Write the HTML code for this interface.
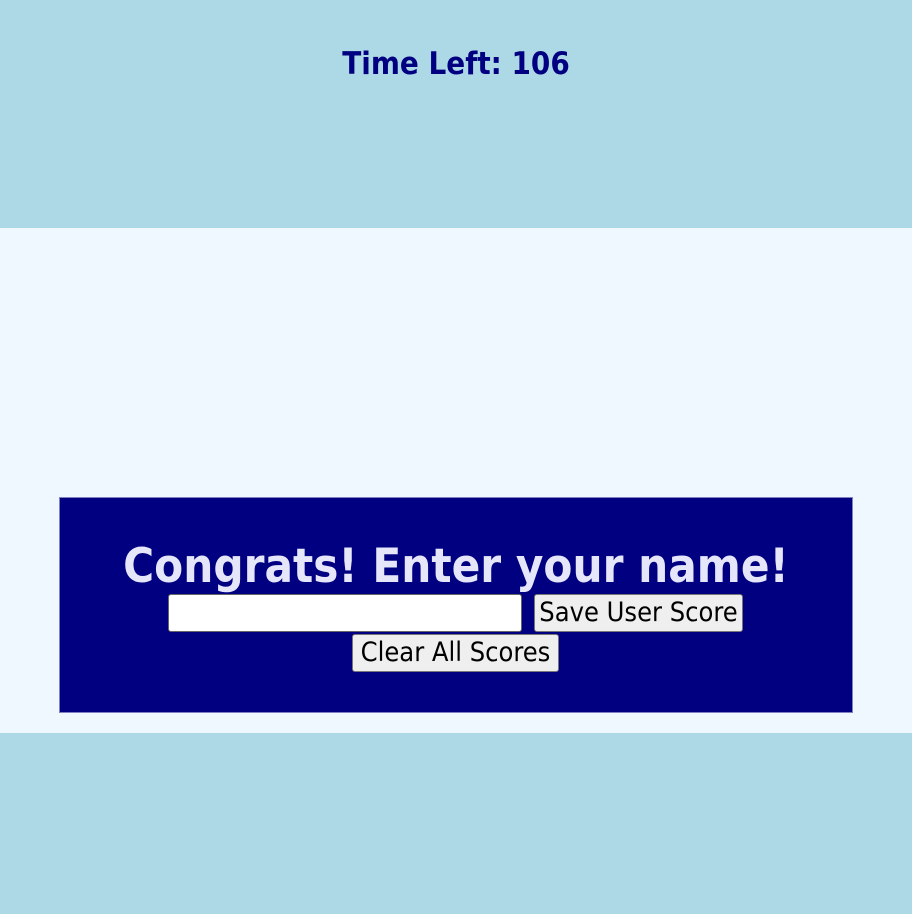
<!DOCTYPE html>
<html><head><style>
body{margin:0;width:912px;height:914px;background:#add8e6;font-family:"DejaVu Sans Condensed","DejaVu Sans",sans-serif;position:relative;overflow:hidden}
.t{position:absolute;top:44px;left:0;width:912px;text-align:center;color:#000080;font-weight:bold;font-size:31px;line-height:40px}
.mid{position:absolute;top:228px;left:0;width:912px;height:505px;background:#f0f8ff}
.box{position:absolute;left:59px;top:497px;width:792px;height:214px;background:#000080;border:1px solid #8080c0}
h1{position:absolute;margin:0;top:39px;left:0;width:792px;text-align:center;color:#e6e6fa;font-size:47px;line-height:60px;font-weight:bold}
.in{position:absolute;left:108px;top:96px;width:352px;height:36px;background:#fff;border:1px solid #666;border-radius:3px}
.b{position:absolute;height:36px;background:#efefef;border:1px solid #777;border-radius:3px;font-size:27px;line-height:36px;text-align:center;color:#000;box-sizing:content-box;white-space:nowrap}
</style></head><body>
<div class="t">Time Left: 106</div>
<div class="mid"></div>
<div class="box">
<h1>Congrats! Enter your name!</h1>
<div class="in"></div>
<div class="b" style="left:474px;top:96px;width:207px">Save User Score</div>
<div class="b" style="left:292px;top:136px;width:205px">Clear All Scores</div>
</div>
</body></html>
